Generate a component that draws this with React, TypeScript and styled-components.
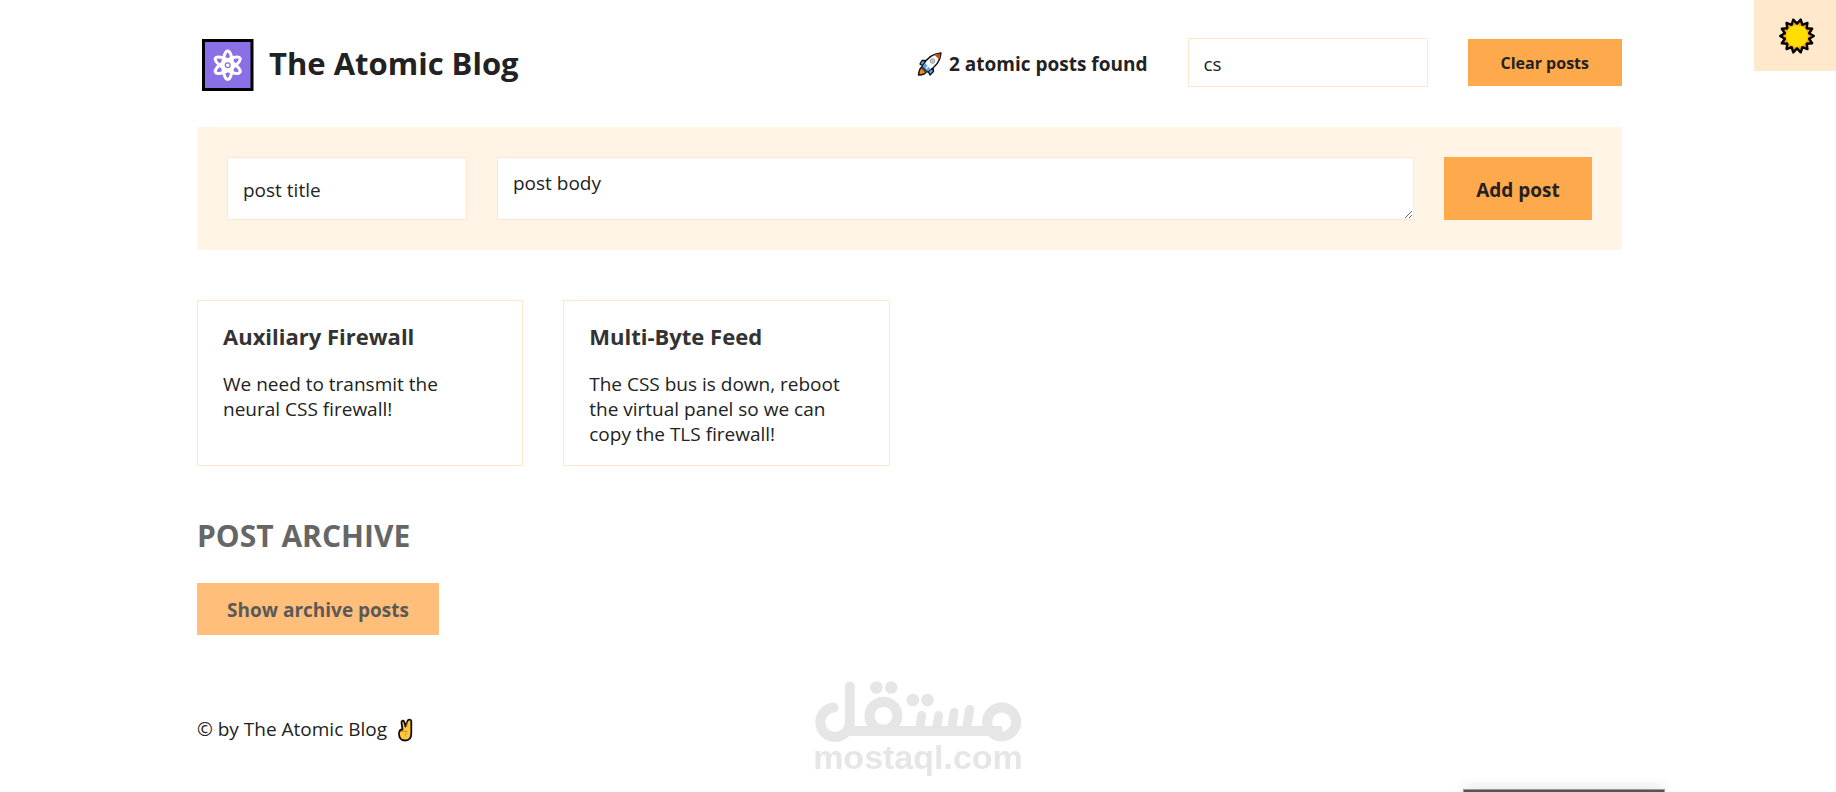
import React from "react";
import styled, { createGlobalStyle, css } from "styled-components";

const GlobalStyle = createGlobalStyle`
  *, *::before, *::after {
    box-sizing: border-box;
  }

  body {
    margin: 0;
    background: #fff;
    color: #222;
    font-family: "Segoe UI", "Open Sans", "Noto Sans", sans-serif;
    font-size: 19px;
    line-height: 25px;
  }

  h1, h2, h3, p {
    margin: 0;
  }
`;

const Page = styled.div`
  padding: 38px 17px 0 0;
`;

const Container = styled.div`
  max-width: 1425px;
  margin: 0 auto;
`;

const Header = styled.header`
  display: flex;
  align-items: flex-start;
  justify-content: space-between;
  margin-bottom: 35px;
`;

const Brand = styled.h1`
  display: flex;
  align-items: flex-end;
  gap: 15px;
  height: 54px;
  padding-left: 5px;
  font-size: 31px;
  line-height: 54px;
  font-weight: 700;
`;

const BrandName = styled.span`
  padding-bottom: 2px;
`;

const BrandIcon = styled.svg`
  display: block;
  width: 52px;
  height: 53px;
`;

const Tools = styled.div`
  display: flex;
  align-items: center;
  gap: 40px;
`;

const Results = styled.p`
  display: flex;
  align-items: center;
  gap: 6px;
  padding-top: 3px;
  font-weight: 700;
`;

const RocketIcon = styled.svg`
  width: 26px;
  height: 26px;
`;

const fieldStyle = css`
  border: 1px solid #ffe8cc;
  border-radius: 0;
  background: #fff;
  color: inherit;
  font: inherit;
  padding: 13px 15px 9px;
  outline: none;
`;

const TextInput = styled.input`
  ${fieldStyle}
  width: 240px;
`;

const TextArea = styled.textarea`
  ${fieldStyle}
  flex: 1;
  min-width: 0;
  height: 63px;
`;

const Button = styled.button<{ $small?: boolean }>`
  min-width: 148px;
  border: none;
  background: #ffa94d;
  color: inherit;
  font: inherit;
  font-weight: 700;
  font-size: ${(p) => (p.$small ? "16px" : "19px")};
  padding: ${(p) => (p.$small ? "12px 33px 10px" : "15px 30px 12px")};
  cursor: pointer;
`;

const PostForm = styled.form`
  display: flex;
  align-items: stretch;
  gap: 30px;
  padding: 30px;
  margin-bottom: 50px;
  background: #fff4e6;
`;

const PostGrid = styled.ul`
  display: grid;
  grid-template-columns: repeat(4, 1fr);
  gap: 40px;
  list-style: none;
  margin: 0 0 50px;
  padding: 0;
`;

const PostCard = styled.li`
  border: 1px solid #ffe8cc;
  padding: 20px 25px 18px;
`;

const PostTitle = styled.h3`
  margin-bottom: 21px;
  color: #333;
  font-size: 22px;
  line-height: 30px;
  font-weight: 700;
`;

const Archive = styled.aside`
  margin-bottom: 82px;
  opacity: 0.75;
`;

const ArchiveTitle = styled.h2`
  margin-bottom: 27px;
  color: #333;
  font-size: 30px;
  line-height: 40px;
  font-weight: 700;
  text-transform: uppercase;
`;

const Footer = styled.footer`
  display: flex;
  align-items: center;
  gap: 10px;
`;

const HandIcon = styled.svg`
  width: 18px;
  height: 24px;
`;

const ThemeToggle = styled.button`
  position: fixed;
  top: 0;
  right: 0;
  display: flex;
  align-items: center;
  justify-content: center;
  width: 82px;
  height: 71px;
  padding: 0 0 0 4px;
  border: none;
  background: #ffe8cc;
  cursor: pointer;
`;

const SunIcon = styled.svg`
  width: 38px;
  height: 38px;
`;

const Watermark = styled.div`
  position: fixed;
  left: 50%;
  bottom: 20px;
  transform: translateX(-50%);
  display: flex;
  flex-direction: column;
  align-items: center;
  color: #e6e6e6;
  font-family: "Liberation Sans", Arial, sans-serif;
  font-size: 34px;
  line-height: 30px;
  font-weight: 700;
`;

const WatermarkMark = styled.svg`
  display: block;
  width: 206px;
  height: 61px;
`;

const BottomPanel = styled.div`
  position: fixed;
  right: 171px;
  bottom: 0;
  width: 202px;
  height: 3px;
  border: 1px solid #999;
  border-bottom: none;
  background: #555;
  box-shadow: 0 0 12px rgba(0, 0, 0, 0.3);
`;

const Atom = () => (
  <BrandIcon viewBox="0 0 52 53" aria-hidden="true">
    <rect x="1.5" y="1.5" width="48.500" height="49" fill="#8b6fe6" stroke="#000" strokeWidth="3" />
    <g fill="none" stroke="#fff" strokeWidth="3">
      {[0, 60, 120].map((a) => (
        <ellipse key={a} cx="25.700" cy="26.200" rx="4.800" ry="14.200" transform={`rotate(${a} 25.7 26.2)`} />
      ))}
    </g>
    <circle cx="25.700" cy="26.200" r="5" fill="#fff" />
    <circle cx="25.700" cy="26.200" r="2.400" fill="#fff" stroke="#8b6fe6" strokeWidth="1.300" />
  </BrandIcon>
);

const Rocket = () => (
  <RocketIcon viewBox="0 0 26 26" aria-hidden="true">
    <g stroke="#111" strokeWidth="1.400" strokeLinejoin="round">
      <path d="M9 9.500 5 9.500 3 13 6 15z" fill="#5aa9f0" />
      <path d="M16 17 16.500 20.500 13 24 11 20z" fill="#5aa9f0" />
      <path d="M5 16C2.500 17 2 20 1.500 24c4 0 7-1 8-3.500z" fill="#e88a1c" />
      <path d="M5 15.500C9 8 15 2.500 24 2c-.5 8-6 14.500-13.500 19z" fill="#fff" />
    </g>
    <path d="M5.700 15.500 8 12l6 6.500-3.500 1.800z" fill="#5aa9f0" />
    <path d="M5 15.500 10.500 21l-2 .8L4.200 17.500z" fill="#444" />
    <path d="M17.500 4C19.500 3.200 21.500 2.700 23.300 2.700c-.1 2-.5 4-1.300 5.800z" fill="#c4511b" />
    <path d="M9 17.500 14 12.500" stroke="#fff" strokeWidth="1.200" />
    <circle cx="15.500" cy="10" r="2.300" fill="#ccc" stroke="#999" />
  </RocketIcon>
);

const VictoryHand = () => (
  <HandIcon viewBox="0 0 18 24" aria-hidden="true">
    <path
      d="M5.500 11.500 4.500 4.500C4.200 2.500 6.800 2 7.300 4L8.500 8.500 10.500 3C11.200 1 14.300 1.200 14.300 3.500V15c0 4.500-2 7.500-6 7.500-4.500 0-6.300-3-6.300-6.500 0-3 1-4.500 3.500-4.500z"
      fill="#ffc83d"
      stroke="#111"
      strokeWidth="1.800"
      strokeLinejoin="round"
    />
    <path d="M4.500 13.500h6M8 17.500 9.500 15M10.500 4.500 9.500 9" fill="none" stroke="#d98a1f" />
  </HandIcon>
);

const sunPoints = Array.from({ length: 28 }, (_, i) => {
  const angle = ((i + 0.5) * Math.PI) / 14 + Math.PI / 28;
  const radius = i % 2 ? 16.8 : 12.4;
  return `${(19 + radius * Math.sin(angle + Math.PI / 14)).toFixed(2)},${(19 - radius * Math.cos(angle + Math.PI / 14)).toFixed(2)}`;
}).join(" ");

const Sun = () => (
  <SunIcon viewBox="0 0 38 38" aria-hidden="true">
    <polygon points={sunPoints} fill="#fba51a" stroke="#000" strokeWidth="2.400" strokeLinejoin="round" />
    <circle cx="19" cy="19" r="10.800" fill="#ffde00" />
  </SunIcon>
);

const MostaqlMark = () => (
  <WatermarkMark viewBox="0 0 206 61" aria-hidden="true">
    <g fill="none" stroke="#e6e6e6" strokeWidth="10" strokeLinecap="round" strokeLinejoin="round">
      <path d="M18.500 26.500A14.800 14.800 0 1 0 34.700 41V5.500" />
      <path d="M34.700 50H187" strokeLinecap="butt" />
      <circle cx="68.300" cy="34.800" r="14" />
      <circle cx="186.500" cy="41" r="14.500" />
    </g>
    <path
      d="M106.500 34.500 104 50M123.500 34.500 121 50M139 31.500 136 50M154.500 28.500 151 50"
      fill="none"
      stroke="#e6e6e6"
      strokeWidth="9"
      strokeLinecap="round"
    />
    <g fill="#e6e6e6">
      <circle cx="61.300" cy="6.500" r="6.300" />
      <circle cx="76" cy="6.500" r="6.300" />
      <circle cx="97.700" cy="19" r="6.300" />
      <circle cx="112.300" cy="19" r="6.300" />
    </g>
  </WatermarkMark>
);

const posts = [
  { title: "Auxiliary Firewall", body: "We need to transmit the neural CSS firewall!" },
  {
    title: "Multi-Byte Feed",
    body: "The CSS bus is down, reboot the virtual panel so we can copy the TLS firewall!",
  },
];

export default function App() {
  return (
    <>
      <GlobalStyle />
      <ThemeToggle type="button" aria-label="Toggle dark mode">
        <Sun />
      </ThemeToggle>
      <Page>
        <Container>
          <Header>
            <Brand>
              <Atom />
              <BrandName>The Atomic Blog</BrandName>
            </Brand>
            <Tools>
              <Results>
                <Rocket />
                2 atomic posts found
              </Results>
              <TextInput type="text" aria-label="Search posts" defaultValue="cs" />
              <Button $small type="button">
                Clear posts
              </Button>
            </Tools>
          </Header>
          <main>
            <PostForm onSubmit={(e: React.FormEvent) => e.preventDefault()}>
              <TextInput type="text" aria-label="Post title" defaultValue="post title" />
              <TextArea aria-label="Post body" defaultValue="post body" />
              <Button type="submit">Add post</Button>
            </PostForm>
            <PostGrid>
              {posts.map((post) => (
                <PostCard key={post.title}>
                  <PostTitle>{post.title}</PostTitle>
                  <p>{post.body}</p>
                </PostCard>
              ))}
            </PostGrid>
          </main>
          <Archive>
            <ArchiveTitle>Post archive</ArchiveTitle>
            <Button type="button">Show archive posts</Button>
          </Archive>
          <Footer>
            © by The Atomic Blog
            <VictoryHand />
          </Footer>
        </Container>
      </Page>
      <Watermark>
        <MostaqlMark />
        mostaql.com
      </Watermark>
      <BottomPanel />
    </>
  );
}
